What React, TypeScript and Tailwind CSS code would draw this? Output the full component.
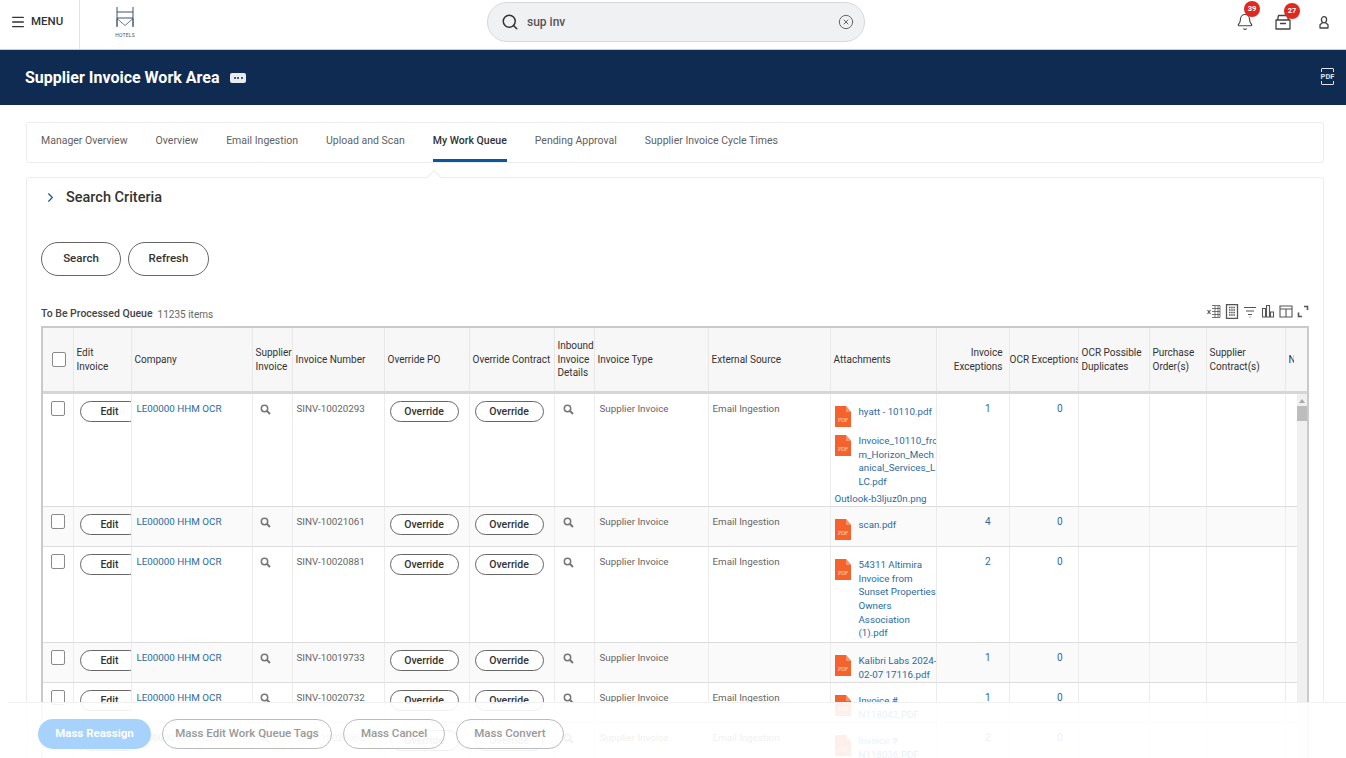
import React from "react";
import { Menu, Search, CircleX, Bell, ChevronRight } from "lucide-react";

const widths = [30, 58, 121, 40, 92, 85, 85, 40, 114, 122, 106, 73, 69, 71, 57, 79, 12];

const PdfIcon = () => (
  <svg width="16" height="21" viewBox="0 0 16 21" className="shrink-0">
    <path d="M0 0H11L16 6V21H0Z" fill="#f4622d" />
    <path d="M11 0L16 6H11Z" fill="#f8946c" />
    <text x="8" y="16" textAnchor="middle" fontSize="5.5" fill="#ffd9c9" fontFamily="Liberation Serif, serif">PDF</text>
  </svg>
);

const Mag = () => (
  <svg width="11" height="11" viewBox="0 0 11 11" fill="none" stroke="#777" strokeWidth="1.5">
    <circle cx="4.5" cy="4.5" r="3.2" />
    <path d="M7 7L10 10" strokeWidth="1.9" />
  </svg>
);

const Pill = ({ children, className = "" }: { children: React.ReactNode; className?: string }) => (
  <span className={`flex h-[21px] items-center justify-center rounded-full border border-[#666] bg-white text-[10.5px] font-medium text-[#333] ${className}`}>
    {children}
  </span>
);

type Att = { lines: string[]; plain?: string };
type Row = { h: number; id: string; num: string; src: string; atts: Att[]; alt?: boolean };

const rows: Row[] = [
  { h: 114, id: "SINV-10020293", num: "1", src: "Email Ingestion", atts: [{ lines: ["hyatt - 10110.pdf"] }, { lines: ["Invoice_10110_fro", "m_Horizon_Mech", "anical_Services_L", "LC.pdf"] }, { lines: [], plain: "Outlook-b3ljuz0n.png" }] },
  { h: 40, id: "SINV-10021061", num: "4", src: "Email Ingestion", alt: true, atts: [{ lines: ["scan.pdf"] }] },
  { h: 96, id: "SINV-10020881", num: "2", src: "Email Ingestion", atts: [{ lines: ["54311 Altimira", "Invoice from", "Sunset Properties", "Owners", "Association", "(1).pdf"] }] },
  { h: 40, id: "SINV-10019733", num: "1", src: "", alt: true, atts: [{ lines: ["Kalibri Labs 2024-", "02-07 17116.pdf"] }] },
  { h: 40, id: "SINV-10020732", num: "1", src: "Email Ingestion", atts: [{ lines: ["Invoice #", "N118042.PDF"] }] },
  { h: 40, id: "SINV-10020565", num: "2", src: "Email Ingestion", alt: true, atts: [{ lines: ["Invoice #", "N118036.PDF"] }] },
];

const Th = ({ children, right, last }: { children?: React.ReactNode; right?: boolean; last?: boolean }) => (
  <th className={`overflow-hidden border-b-[3px] border-[#d4d6d7] px-[3px] align-middle text-[10px] leading-[13.5px] font-normal text-[#333] ${last ? "" : "border-r border-r-[#e8e8e8]"} ${right ? "pr-[6px] text-right" : "text-left"}`}>
    {children}
  </th>
);

const Td = ({ children, className = "" }: { children?: React.ReactNode; className?: string }) => (
  <td className={`overflow-hidden border-r border-b border-r-[#ececec] border-b-[#dcdcdc] align-top ${className}`}>{children}</td>
);

const tabs = ["Manager Overview", "Overview", "Email Ingestion", "Upload and Scan", "My Work Queue", "Pending Approval", "Supplier Invoice Cycle Times"];

const ToolIcon = ({ children, w = 14 }: { children: React.ReactNode; w?: number }) => (
  <svg width={w} height="15" viewBox={`0 0 ${w} 15`} fill="none" stroke="#555" strokeWidth="1.1">
    {children}
  </svg>
);

export default function App() {
  return (
    <div className="relative h-[758px] w-[1346px] overflow-hidden bg-white [font-family:Roboto,sans-serif]">
      {/* top bar */}
      <header className="relative flex h-[50px] items-center border-b border-[#c9cdd0] bg-white">
        <div className="flex h-full w-[80px] items-center gap-[5px] border-r border-[#e3e3e3] pb-[5px] pl-[10px]">
          <Menu size={16} strokeWidth={2} className="text-[#333]" />
          <span className="text-[11.5px] font-medium text-[#333]">MENU</span>
        </div>
        <div className="ml-[35px] flex h-full w-[20px] flex-col items-center pt-[7px]">
          <svg width="18" height="20" viewBox="0 0 18 20" fill="none" stroke="#27415f" strokeWidth="0.9">
            <path d="M1 0V20M17 0V20M1 5H17M1 11H17" />
            <path d="M1 19.5L1 11.5L9 18.5L17 11.5V19.5" strokeWidth="0.7" />
          </svg>
          <span className="mt-[6px] text-[5px] leading-none tracking-[0.2px] text-[#555]">HOTELS</span>
        </div>
        <div className="mb-[5px] ml-[352px] flex h-[40px] w-[378px] items-center rounded-full border border-[#d6d9db] bg-[#f0f1f3] pr-[10px] pl-[13px]">
          <Search size={18} strokeWidth={2} className="text-[#333]" />
          <span className="ml-[8px] flex-1 text-[12px] font-medium text-[#555]">sup inv</span>
          <CircleX size={16} strokeWidth={1.5} className="text-[#666]" />
        </div>
        <div className="mb-[5px] ml-[371px] flex items-center">
          <span className="relative block">
            <Bell size={18} strokeWidth={1.5} className="text-[#444]" />
            <span className="absolute -top-[12px] left-[8px] flex h-[16px] w-[16px] items-center justify-center rounded-full bg-[#e0281f] text-[7.5px] font-bold text-white">39</span>
          </span>
          <span className="relative ml-[21px] block">
            <svg width="16" height="16" viewBox="0 0 16 16" fill="none" stroke="#444" strokeWidth="1.3" strokeLinejoin="round">
              <path d="M2.5 6L3.5 1.5H12.5L13.5 6" />
              <path d="M1 6H15V15H1Z" />
              <path d="M5 9.5H11" strokeWidth="1.5" />
            </svg>
            <span className="absolute -top-[11px] left-[9px] flex h-[16px] w-[16px] items-center justify-center rounded-full bg-[#e0281f] text-[7.5px] font-bold text-white">27</span>
          </span>
          <svg width="10" height="13" viewBox="0 0 10 13" fill="none" stroke="#444" strokeWidth="1.3" className="ml-[28px]">
            <ellipse cx="5" cy="3.8" rx="2.6" ry="3.1" />
            <path d="M3.4 6.8L1 8.8V12H9V8.8L6.6 6.8" strokeLinejoin="round" />
          </svg>
        </div>
      </header>

      {/* title band */}
      <div className="flex h-[55px] items-center bg-[#0f2b52] pt-[1px] pr-[12px] pl-[25px]">
        <h1 className="text-[16px] font-bold text-white">Supplier Invoice Work Area</h1>
        <span className="ml-[11px] flex h-[10px] w-[16px] items-center justify-center gap-[1.5px] rounded-[2px] bg-[#e8ebef]">
          <i className="h-[2px] w-[2px] rounded-full bg-[#0f2b52]" />
          <i className="h-[2px] w-[2px] rounded-full bg-[#0f2b52]" />
          <i className="h-[2px] w-[2px] rounded-full bg-[#0f2b52]" />
        </span>
        <span className="relative ml-auto mb-[4px] flex h-[17px] w-[13px] items-center justify-center rounded-[1px] border border-[#dfe4ea]">
          <span className="bg-[#0f2b52] px-[1px] text-[7.5px] leading-[9px] font-bold text-[#dfe4ea]">PDF</span>
        </span>
      </div>

      <main className="pt-[17px] pr-[22px] pl-[26px]">
        {/* tabs */}
        <nav className="flex h-[41px] gap-[28px] rounded-[3px] border border-[#ececec] pl-[14px]">
          {tabs.map((t) => {
            const active = t === "My Work Queue";
            return (
              <span key={t} className={`flex h-full items-center border-b-[3px] pb-[1px] text-[10.5px] ${active ? "border-[#0a56a3] font-medium text-[#333]" : "border-transparent text-[#5f5f5f]"}`}>
                {t}
              </span>
            );
          })}
        </nav>

        {/* search card */}
        <section className="relative mt-[14px] h-[600px] rounded-t-[3px] border border-[#ececec] px-[14px]">
          <span className="absolute -top-[6px] left-[402px] h-[10px] w-[10px] rotate-45 border-t border-l border-[#ececec] bg-white" />
          <div className="flex items-center pt-[9px]">
            <ChevronRight size={15} strokeWidth={1.8} className="ml-[2px] text-[#0a56a3]" />
            <h2 className="ml-[8px] text-[14.5px] font-medium text-[#333]">Search Criteria</h2>
          </div>
          <div className="mt-[33px] flex gap-[7px]">
            <span className="flex h-[34px] w-[80px] items-center justify-center rounded-full border border-[#666] text-[11.5px] font-medium text-[#333]">Search</span>
            <span className="flex h-[34px] w-[81px] items-center justify-center rounded-full border border-[#666] text-[11.5px] font-medium text-[#333]">Refresh</span>
          </div>
          <div className="mt-[27px] flex h-[23px] items-center">
            <span className="text-[10.5px] font-medium text-[#444]">To Be Processed Queue</span>
            <span className="ml-[5px] text-[10px] text-[#666]">11235 items</span>
            <div className="ml-auto flex gap-[4px] pb-[5px]">
              <ToolIcon>
                <path d="M5 1.5H13V13.5H5M8 1.5V13.5M11 1.5V13.5M5 4.5H13M5 7.5H13M5 10.5H13" strokeWidth="0.8" />
                <path d="M0.5 6L3.5 10M3.5 6L0.5 10" />
              </ToolIcon>
              <ToolIcon>
                <path d="M1.5 0.5H12.5V14.5H1.5Z" strokeWidth="1.3" />
                <path d="M4 3.5H10M4 6H10M4 8.5H10M4 11H10" strokeWidth="1.3" strokeDasharray="1.5 0.7" />
              </ToolIcon>
              <ToolIcon>
                <path d="M1 3.5H13M3 7H11M5 10.5H9M6.5 13H7.5" strokeWidth="1.2" />
              </ToolIcon>
              <ToolIcon>
                <path d="M1.5 4.5H4.5V13H1.5ZM5.5 1.5H8.5V13H5.5ZM9.5 8H12.5V13H9.5Z" />
              </ToolIcon>
              <ToolIcon>
                <path d="M1 2H13V13H1ZM1 5H13M7 5V13" />
              </ToolIcon>
              <ToolIcon w={12}>
                <path d="M7 2.5H10.5V6M1.5 8.5V12.5H5" strokeWidth="1.6" />
              </ToolIcon>
            </div>
          </div>

          {/* table */}
          <div className="flex h-[440px] w-[1268px] overflow-hidden border-2 border-b-0 border-[#c8cacb]">
            <div className="w-[1254px] shrink-0 overflow-hidden">
              <table className="w-[1254px] table-fixed border-collapse">
                <colgroup>
                  {widths.map((w, i) => (
                    <col key={i} style={{ width: w }} />
                  ))}
                </colgroup>
                <thead>
                  <tr className="h-[65px] bg-[#f7f7f7]">
                    <Th>
                      <span className="ml-[6px] block h-[15px] w-[14px] rounded-[2px] border border-[#8a8a8a] bg-white" />
                    </Th>
                    <Th>Edit Invoice</Th>
                    <Th>Company</Th>
                    <Th>Supplier Invoice</Th>
                    <Th>Invoice Number</Th>
                    <Th>Override PO</Th>
                    <Th>Override Contract</Th>
                    <Th>Inbound Invoice Details</Th>
                    <Th>Invoice Type</Th>
                    <Th>External Source</Th>
                    <Th>Attachments</Th>
                    <Th right>Invoice Exceptions</Th>
                    <Th right>
                      <span className="-ml-[3px] block whitespace-nowrap">OCR Exceptions</span>
                    </Th>
                    <Th>OCR Possible Duplicates</Th>
                    <Th>Purchase Order(s)</Th>
                    <Th>Supplier Contract(s)</Th>
                    <Th last>
                      <span className="block h-[13px] overflow-hidden whitespace-nowrap">No</span>
                    </Th>
                  </tr>
                </thead>
                <tbody>
                  {rows.map((r) => (
                    <tr key={r.id} style={{ height: r.h }} className={r.alt ? "bg-[#fafafa]" : "bg-white"}>
                      <Td>
                        <span className="mt-[7px] ml-[8px] block h-[15px] w-[14px] rounded-[2px] border border-[#8a8a8a] bg-white" />
                      </Td>
                      <Td>
                        <Pill className="mt-[7px] ml-[6px] w-[60px]">Edit</Pill>
                      </Td>
                      <Td className="px-[5px] pt-[8px] text-[9.8px] leading-[13.5px] whitespace-nowrap text-[#2b6a9f]">LE00000 HHM OCR</Td>
                      <Td className="pt-[10px] pl-[7px]"><Mag /></Td>
                      <Td className="px-[4px] pt-[8px] text-[9.8px] leading-[13.5px] text-[#666]">{r.id}</Td>
                      <Td><Pill className="mt-[7px] ml-[5px] w-[69px]">Override</Pill></Td>
                      <Td><Pill className="mt-[7px] ml-[5px] w-[69px]">Override</Pill></Td>
                      <Td className="pt-[10px] pl-[8px]"><Mag /></Td>
                      <Td className="px-[5px] pt-[8px] text-[9.8px] leading-[13.5px] text-[#666]">Supplier Invoice</Td>
                      <Td className="px-[4px] pt-[8px] text-[9.8px] leading-[13.5px] text-[#666]">{r.src}</Td>
                      <Td className="pt-[12px] pl-[4px] text-[9.75px] leading-[13.6px] text-[#2b6a9f]">
                        {r.atts.map((a, i) =>
                          a.plain ? (
                            <div key={i} className="mt-[3px] whitespace-nowrap">{a.plain}</div>
                          ) : (
                            <div key={i} className={`flex gap-[8px] ${i > 0 ? "mt-[8px]" : ""}`}>
                              <PdfIcon />
                              <div className="-mt-[1px] whitespace-nowrap">
                                {a.lines.map((l) => (
                                  <div key={l}>{l}</div>
                                ))}
                              </div>
                            </div>
                          )
                        )}
                      </Td>
                      <Td className="pt-[8px] pr-[18px] text-right text-[10px] leading-[13.5px] text-[#2b6a9f]">{r.num}</Td>
                      <Td className="pt-[8px] pr-[15px] text-right text-[10px] leading-[13.5px] text-[#2b6a9f]">0</Td>
                      <Td />
                      <Td />
                      <Td />
                      <Td className="border-r-0" />
                    </tr>
                  ))}
                </tbody>
              </table>
            </div>
            <div className="flex-1 bg-[#f7f7f7]">
              <div className="h-[66px] border-b-[3px] border-[#d4d6d7]" />
              <div className="flex h-full flex-col items-center bg-[#f0f0f0] pt-[5px]">
                <span className="h-0 w-0 border-x-[3px] border-b-[4px] border-x-transparent border-b-[#aaa]" />
                <span className="mt-[3px] h-[15px] w-[10px] bg-[#bdbdbd]" />
              </div>
            </div>
          </div>
        </section>
      </main>

      {/* floating action bar */}
      <div className="absolute right-0 bottom-0 left-[8px] flex h-[56px] gap-[11px] border-t border-[#f0f0f0] bg-white/90 pt-[16px] pl-[30px]">
        <span className="flex h-[30px] w-[113px] items-center justify-center rounded-full bg-[#a6d2fb] text-[11.5px] font-bold text-white">Mass Reassign</span>
        <span className="flex h-[30px] w-[170px] items-center justify-center rounded-full border border-[#bbb] bg-white/40 text-[11.5px] font-medium text-[#999]">Mass Edit Work Queue Tags</span>
        <span className="flex h-[30px] w-[102px] items-center justify-center rounded-full border border-[#bbb] bg-white/40 text-[11.5px] font-medium text-[#999]">Mass Cancel</span>
        <span className="flex h-[30px] w-[108px] items-center justify-center rounded-full border border-[#bbb] bg-white/40 text-[11.5px] font-medium text-[#999]">Mass Convert</span>
      </div>
    </div>
  );
}
